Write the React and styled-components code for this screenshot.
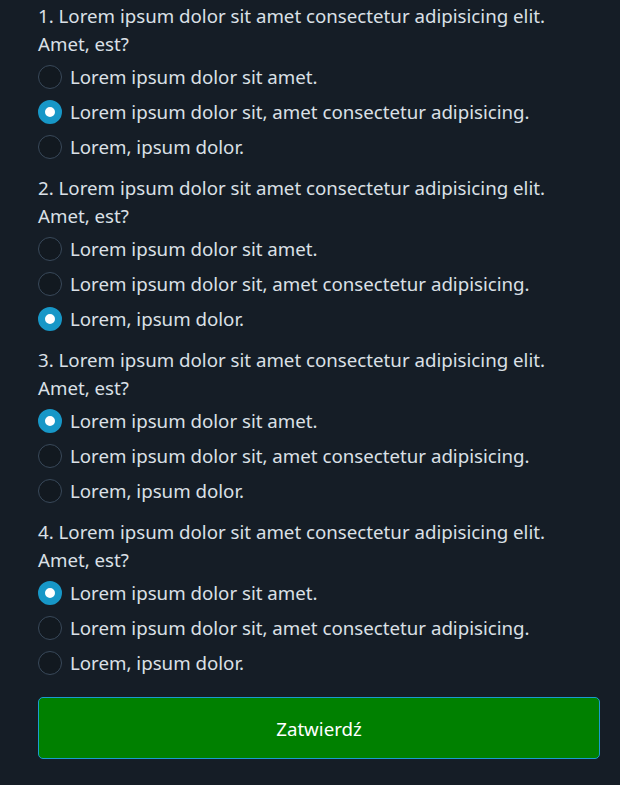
import React, { useState } from "react";
import styled, { createGlobalStyle } from "styled-components";

const Global = createGlobalStyle`
  html, body { margin: 0; padding: 0; background: #151d26; }
  body { font-family: "Segoe UI", "Noto Sans", "Open Sans", sans-serif; color: #dee2e6; }
  * { box-sizing: border-box; }
`;

const Page = styled.form`
  padding: 2px 20px 27px 38px;
  min-height: 785px;
  background: #151d26;
`;

const Question = styled.div`
  margin: 0 0 10px;
`;

const QuestionText = styled.p`
  padding: 0;
  margin: 0 0 1px;
  font-size: 18.7px;
  line-height: 28px;
  color: #dbe0e6;
`;

const Option = styled.label`
  display: flex;
  align-items: center;
  gap: 8px;
  height: 35px;
  font-size: 18.7px;
  color: #dbe0e6;
  cursor: pointer;
`;

const Radio = styled.input.attrs({ type: "radio" })`
  appearance: none;
  margin: 0;
  width: 24px;
  height: 24px;
  flex: 0 0 24px;
  border-radius: 50%;
  border: 1.5px solid #39495a;
  background: #121920;
  cursor: pointer;
  &:checked {
    border: 7px solid #1797c7;
    background: #ffffff;
  }
`;

const Submit = styled.button`
  display: block;
  width: 100%;
  height: 62px;
  margin-top: 17px;
  background: #008000;
  color: #ffffff;
  border: 1px solid #1a9bcf;
  border-radius: 5px;
  font-family: inherit;
  font-size: 18.7px;
  cursor: pointer;
`;

const options = [
  "Lorem ipsum dolor sit amet.",
  "Lorem ipsum dolor sit, amet consectetur adipisicing.",
  "Lorem, ipsum dolor.",
];

const initial = [1, 2, 0, 0];

export default function App() {
  const [answers, setAnswers] = useState(initial);
  return (
    <>
      <Global />
      <Page onSubmit={(e) => e.preventDefault()}>
        {answers.map((sel, qi) => (
          <Question key={qi} role="radiogroup">
            <QuestionText>
              {qi + 1}. Lorem ipsum dolor sit amet consectetur adipisicing elit. Amet, est?
            </QuestionText>
            {options.map((o, oi) => (
              <Option key={oi}>
                <Radio
                  name={`q${qi}`}
                  checked={sel === oi}
                  onChange={() =>
                    setAnswers((a) => a.map((v, i) => (i === qi ? oi : v)))
                  }
                />
                {o}
              </Option>
            ))}
          </Question>
        ))}
        <Submit type="submit">Zatwierdź</Submit>
      </Page>
    </>
  );
}
